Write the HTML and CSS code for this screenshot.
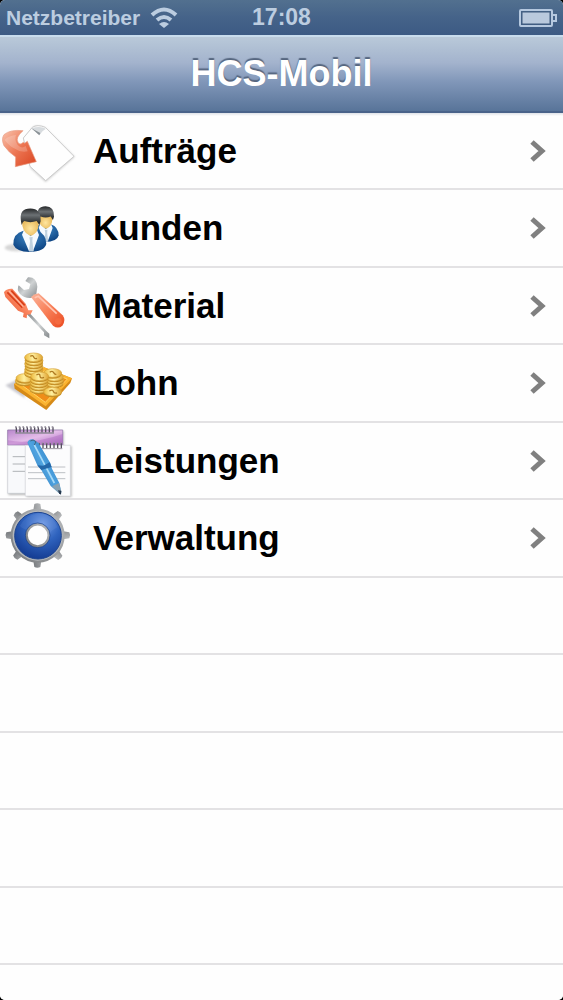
FILE: index.html
```html
<!DOCTYPE html>
<html lang="de">
<head>
    <meta charset="UTF-8">
    <meta name="viewport" content="width=device-width, initial-scale=1.0">
    <title>HCS-Mobil</title>
    <link rel="stylesheet" href="styles.css">
</head>
<body>
    <div class="screen">
        <div class="status-bar">
            <div class="carrier">
                <span>Netzbetreiber</span>
                <svg class="wifi" viewBox="0 0 28 22" aria-hidden="true">
                    <path d="M2 8Q14 -3 26 8M7 13Q14 7 21 13" fill="none" stroke="#bccde0" stroke-width="4"/>
                    <path d="M9 17Q14 13 19 17L14 21Z" fill="#bccde0"/>
                </svg>
            </div>
            <span class="time">17:08</span>
            <svg class="battery" viewBox="0 0 38 18" aria-hidden="true">
                <rect x="1" y="1" width="32" height="16" rx="1" fill="none" stroke="#b5c8df" stroke-width="2"/>
                <rect x="3" y="3" width="28" height="12" fill="#b9c9dd" stroke="#3f5a7e"/>
                <path d="M34 6H37V12H34" fill="none" stroke="#b5c8df" stroke-width="2"/>
            </svg>
        </div>

        <header class="nav-bar">
            <h1>HCS-Mobil</h1>
        </header>

        <nav class="list">
            <a class="row" href="#auftraege">
                <svg class="icon" viewBox="0 0 270 225" aria-hidden="true">
                    <defs>
                        <linearGradient id="arrow" x1="0" y1="0" x2="1" y2="1">
                            <stop offset="0" stop-color="#f9c3ad"/>
                            <stop offset=".5" stop-color="#ec7552"/>
                            <stop offset="1" stop-color="#d94420"/>
                        </linearGradient>
                        <filter id="soft" x="-20%" y="-20%" width="140%" height="140%">
                            <feGaussianBlur stdDeviation="3"/>
                        </filter>
                    </defs>
                    <path d="M75 78L100 42Q112 35 136 45L224 131L137 207L92 166Z" fill="#999" opacity=".5" filter="url(#soft)"/>
                    <path d="M70 75L97 43Q112 33 136 43L222 130L137 203L90 160Z" fill="#fefefe" stroke="#ccc" stroke-width="3"/>
                    <path d="M94 46Q104 53 118 67Q125 53 138 47Q120 38 94 46Z" fill="#d8dcdf"/>
                    <path d="M94 46L118 67L121 60Z" fill="#8a9196"/>
                    <path d="M69 53Q30 49 12 65Q3 78 12 98Q27 119 47 132L46 161L109 146L82 85L74 91L70 88Q59 98 54 88Q45 74 69 53Z" fill="url(#arrow)" stroke="#e99a80" stroke-width="2"/>
                    <path d="M14 80Q28 68 48 66Q42 80 53 96Q65 109 77 99L83 115Q62 120 42 106Q23 95 14 80Z" fill="#fff" opacity=".2"/>
                </svg>
                <span class="label">Aufträge</span>
                <svg class="chevron" viewBox="0 0 16 22" aria-hidden="true"><path d="M2 2L12 11L2 20"/></svg>
            </a>
            <a class="row" href="#kunden">
                <svg class="icon" viewBox="0 0 270 225" aria-hidden="true">
                    <defs>
                        <radialGradient id="suit" cx=".5" cy=".3" r=".7">
                            <stop offset="0" stop-color="#3c86c4"/>
                            <stop offset="1" stop-color="#0d4382"/>
                        </radialGradient>
                        <radialGradient id="face" cx=".5" cy=".6" r=".6">
                            <stop offset="0" stop-color="#ffe6a0"/>
                            <stop offset="1" stop-color="#e5b352"/>
                        </radialGradient>
                        <linearGradient id="hair" x1="0" y1="0" x2="0" y2="1">
                            <stop offset="0" stop-color="#252729"/>
                            <stop offset=".4" stop-color="#6c7174"/>
                            <stop offset="1" stop-color="#17191b"/>
                        </linearGradient>
                        <g id="person">
                            <path d="M40 161Q39 127 70 119L112 119Q138 128 139 159Q133 182 89 183Q48 181 40 161Z" fill="url(#suit)"/>
                            <path d="M72 116L66 131L87 181H99L117 132L110 114L92 136Z" fill="#f5faff"/>
                            <path d="M88 139L98 138L97 150L101 181H87L90 150Z" fill="#bfd1df"/>
                            <path d="M66 91Q66 124 87 132Q94 137 102 130Q118 120 116 86L101 80L77 83Z" fill="url(#face)"/>
                            <path d="M65 102Q54 56 83 53Q124 48 122 91L118 102L110 90Q91 97 73 90Q68 92 65 102Z" fill="url(#hair)"/>
                        </g>
                    </defs>
                    <ellipse cx="50" cy="170" rx="36" ry="11" fill="#777" opacity=".3" filter="url(#soft)"/>
                    <use href="#person" transform="translate(62 3) scale(.82)"/>
                    <use href="#person"/>
                </svg>
                <span class="label">Kunden</span>
                <svg class="chevron" viewBox="0 0 16 22" aria-hidden="true"><path d="M2 2L12 11L2 20"/></svg>
            </a>
            <a class="row" href="#material">
                <svg class="icon" viewBox="0 0 270 225" aria-hidden="true">
                    <defs>
                        <linearGradient id="steel" x1="0" y1="0" x2="1" y2="1">
                            <stop offset="0" stop-color="#777d80"/>
                            <stop offset=".5" stop-color="#d0d3d4"/>
                            <stop offset="1" stop-color="#84898c"/>
                        </linearGradient>
                        <linearGradient id="grip" x1="1" y1="0" x2="0" y2="1">
                            <stop offset="0" stop-color="#e65c38"/>
                            <stop offset=".45" stop-color="#fb8963"/>
                            <stop offset="1" stop-color="#e2431c"/>
                        </linearGradient>
                        <linearGradient id="handle" x1="0" y1="0" x2="1" y2="1">
                            <stop offset="0" stop-color="#fbb49b"/>
                            <stop offset=".5" stop-color="#f87f58"/>
                            <stop offset="1" stop-color="#ea4a20"/>
                        </linearGradient>
                    </defs>
                    <path d="M84 28Q109 26 112 56L109 78L94 90Q74 92 60 78Q49 65 56 52L72 66L87 63L91 48L76 39Z" fill="url(#steel)"/>
                    <path d="M93 87Q101 78 116 76L188 142Q199 157 187 173Q174 184 159 173Z" fill="url(#handle)"/>
                    <path d="M104 89L115 85L170 137" fill="none" stroke="#ffc4b0" stroke-width="5"/>
                    <circle cx="175" cy="160" r="10" fill="#f4693f"/>
                    <path d="M81 139L88 134L139 189L148 197V211L132 202L132 193Z" fill="url(#steel)"/>
                    <path d="M12 73Q18 61 37 62L77 107L85 127L98 127L92 139L81 140L80 151L69 147L71 135L54 128L16 87Z" fill="url(#grip)"/>
                    <path d="M22 73L67 119M34 68L74 112" fill="none" stroke="#d9401a" stroke-width="5"/>
                    <path d="M27 69L70 116" fill="none" stroke="#ffb59d" stroke-width="4"/>
                </svg>
                <span class="label">Material</span>
                <svg class="chevron" viewBox="0 0 16 22" aria-hidden="true"><path d="M2 2L12 11L2 20"/></svg>
            </a>
            <a class="row" href="#lohn">
                <svg class="icon" viewBox="0 0 270 225" aria-hidden="true">
                    <defs>
                        <linearGradient id="gold" x1="0" y1="0" x2="1" y2="0">
                            <stop offset="0" stop-color="#ecb93c"/>
                            <stop offset=".45" stop-color="#fff0a0"/>
                            <stop offset="1" stop-color="#dfa432"/>
                        </linearGradient>
                        <g id="coin">
                            <ellipse cx="0" cy="4" rx="27" ry="13" fill="#c28d25"/>
                            <ellipse cx="0" cy="0" rx="27" ry="13" fill="url(#gold)" stroke="#d6a136" stroke-width="2"/>
                        </g>
                    </defs>
                    <path d="M16 118L66 95L75 157L120 185L45 137Z" fill="#778" opacity=".4" filter="url(#soft)"/>
                    <path d="M42 114L132 64L216 97L211 111L139 192L44 128Z" fill="#d68a17"/>
                    <path d="M42 114L132 64L216 97L137 181Z" fill="#fbb32f"/>
                    <path d="M61 114L133 75L202 99L136 169Z" fill="#ef8d19" stroke="#ffd464" stroke-width="3"/>
                    <use href="#coin" x="73" y="104"/>
                    <use href="#coin" x="75" y="96"/>
                    <use href="#coin" x="100" y="80"/>
                    <use href="#coin" x="101" y="71"/>
                    <use href="#coin" x="102" y="62"/>
                    <use href="#coin" x="101" y="53"/>
                    <use href="#coin" x="102" y="44"/>
                    <use href="#coin" x="101" y="34"/>
                    <use href="#coin" x="163" y="110"/>
                    <use href="#coin" x="164" y="101"/>
                    <use href="#coin" x="163" y="92"/>
                    <use href="#coin" x="158" y="81"/>
                    <use href="#coin" x="116" y="128"/>
                    <use href="#coin" x="117" y="119"/>
                    <use href="#coin" x="117" y="110"/>
                    <use href="#coin" x="118" y="101"/>
                    <use href="#coin" x="119" y="91"/>
                    <use href="#coin" x="158" y="137"/>
                    <path d="M91 31Q98 26 101 33T111 37M109 87Q120 81 120 90T132 94M149 79Q157 73 161 80T169 84M148 135Q158 129 160 136T171 141" fill="none" stroke="#ae7a22" stroke-width="4"/>
                </svg>
                <span class="label">Lohn</span>
                <svg class="chevron" viewBox="0 0 16 22" aria-hidden="true"><path d="M2 2L12 11L2 20"/></svg>
            </a>
            <a class="row" href="#leistungen">
                <svg class="icon" viewBox="0 0 270 225" aria-hidden="true">
                    <defs>
                        <linearGradient id="cover" x1="0" y1="0" x2="1" y2="1">
                            <stop offset="0" stop-color="#b887cc"/>
                            <stop offset=".5" stop-color="#e4bce9"/>
                            <stop offset="1" stop-color="#a669bd"/>
                        </linearGradient>
                        <linearGradient id="pen" x1="0" y1="1" x2="1" y2="0">
                            <stop offset="0" stop-color="#145294"/>
                            <stop offset=".5" stop-color="#4fa3e0"/>
                            <stop offset="1" stop-color="#1767b0"/>
                        </linearGradient>
                    </defs>
                    <path d="M25 24H191V216H25Z" fill="#777" opacity=".5" filter="url(#soft)"/>
                    <path d="M23 21H188V211H23Z" fill="#f8f9fb" stroke="#c9cbd2" stroke-width="2"/>
                    <path d="M23 21H188V66H23Z" fill="url(#cover)" stroke="#9275aa" stroke-width="2"/>
                    <path d="M24 52Q92 66 188 33V65H24Z" fill="#a75dbb" opacity=".35"/>
                    <path d="M49 29V13M60 29V13M71 29V13M82 29V13M93 29V13M104 29V13M115 29V13M126 29V13M137 29V13M148 29V13M159 29V13" stroke="#56505f" stroke-width="4"/>
                    <path d="M45 12H50M56 12H61M67 12H72M78 12H83M89 12H94M100 12H105M111 12H116M122 12H127M133 12H138M144 12H149M155 12H160M46 30H162" stroke="#8f8996" stroke-width="4"/>
                    <path d="M38 101H75M38 123H75M38 145H75" stroke="#8b8f94" stroke-width="2"/>
                    <path d="M79 69H215V222H79Z" fill="#777" opacity=".5" filter="url(#soft)"/>
                    <path d="M76 67H211V219H76Z" fill="#fcfcfd" stroke="#d5d7dc" stroke-width="2"/>
                    <path d="M118 76V60M129 76V60M140 76V60M151 76V60M162 76V60M173 76V60M184 76V60" stroke="#57515f" stroke-width="4"/>
                    <path d="M114 60H119M125 60H130M136 60H141M147 60H152M158 60H163M169 60H174M180 60H185M113 77H187" stroke="#99939e" stroke-width="3"/>
                    <path d="M84 132H196M84 149H196M84 167H196" stroke="#9da2a9" stroke-width="2"/>
                    <path d="M82 59Q88 46 102 50L116 61L151 120L156 137L178 180L184 207L181 214L173 207L152 189L124 141L112 127Z" fill="url(#pen)"/>
                    <path d="M103 66L134 125L163 180" fill="none" stroke="#a9dbf8" stroke-width="5"/>
                    <path d="M112 127L124 141L155 132L149 118L130 128Z" fill="#2467a8"/>
                    <path d="M156 190L177 180L184 207L181 214L173 207Z" fill="#8aa2b1"/>
                    <path d="M174 202L184 203L183 215L177 211Z" fill="#26374d"/>
                    <path d="M91 54Q99 47 108 56L103 66" fill="none" stroke="#446682" stroke-width="3"/>
                </svg>
                <span class="label">Leistungen</span>
                <svg class="chevron" viewBox="0 0 16 22" aria-hidden="true"><path d="M2 2L12 11L2 20"/></svg>
            </a>
            <a class="row" href="#verwaltung">
                <svg class="icon" viewBox="0 0 270 225" aria-hidden="true">
                    <defs>
                        <linearGradient id="ring" x1="1" y1="0" x2="0" y2="1">
                            <stop offset="0" stop-color="#b9bbbd"/>
                            <stop offset="1" stop-color="#777a7d"/>
                        </linearGradient>
                        <radialGradient id="blue" cx=".6" cy=".25" r=".75">
                            <stop offset="0" stop-color="#719ae4"/>
                            <stop offset=".5" stop-color="#2f63be"/>
                            <stop offset="1" stop-color="#153d94"/>
                        </radialGradient>
                        <g id="teeth">
                            <path d="M103 12Q112 7 121 12L124 30H100ZM103 201Q112 206 121 201L124 183H100Z"/>
                        </g>
                    </defs>
                    <g fill="url(#ring)">
                        <use href="#teeth"/>
                        <use href="#teeth" transform="rotate(45 113 107)"/>
                        <use href="#teeth" transform="rotate(90 113 107)"/>
                        <use href="#teeth" transform="rotate(135 113 107)"/>
                    </g>
                    <circle cx="113" cy="107" r="78" fill="#b4b7ba" stroke="url(#ring)" stroke-width="6"/>
                    <circle cx="114" cy="107" r="70" fill="url(#blue)" stroke="#1c438f" stroke-width="3"/>
                    <path d="M111 41Q155 38 172 82Q144 98 147 107Q141 73 113 73Q91 74 82 91Q61 82 60 77Q78 44 111 41Z" fill="#a9c6fa" opacity=".1"/>
                    <circle cx="113" cy="106" r="33" fill="#fefefe" stroke="url(#ring)" stroke-width="7"/>
                    <circle cx="113" cy="106" r="37" fill="none" stroke="#193e82" stroke-width="2"/>
                </svg>
                <span class="label">Verwaltung</span>
                <svg class="chevron" viewBox="0 0 16 22" aria-hidden="true"><path d="M2 2L12 11L2 20"/></svg>
            </a>
            <div class="row"></div>
            <div class="row"></div>
            <div class="row"></div>
            <div class="row"></div>
            <div class="row"></div>
            <div class="row-rest"></div>
        </nav>
    </div>
</body>
</html>
```

FILE: styles.css
```css
* {
    box-sizing: border-box;
}
body {
    margin: 0;
    background-color: #000;
    font-family: "Liberation Sans", Arial, sans-serif;
    font-weight: bold;
}
.screen {
    display: flex;
    flex-direction: column;
    min-height: 100vh;
    background-color: #fefefe;
    border-radius: 5px;
    overflow: hidden;
}
.status-bar {
    display: grid;
    grid-template-columns: 1fr auto 1fr;
    align-items: center;
    height: 35px;
    padding: 0 6px;
    background: linear-gradient(#52708f, #456389 50%, #3c5a84);
    color: #bccde0;
}
.carrier {
    display: flex;
    align-items: center;
    gap: 10px;
    font-size: 21px;
}
.wifi {
    width: 28px;
    height: 22px;
}
.time {
    font-size: 23px;
}
.battery {
    width: 38px;
    height: 18px;
    justify-self: end;
}
.nav-bar {
    display: flex;
    align-items: center;
    justify-content: center;
    height: 78px;
    background: linear-gradient(#b9c9d9, #a3b3cd 35%, #8197b9 60%, #587499);
    border-top: 2px solid #c8dced;
    border-bottom: 2px solid #4a638a;
}
.nav-bar h1 {
    margin: 0;
    font-size: 36px;
    line-height: 40px;
    color: #fff;
    text-shadow: 0 -2px 1px #56667f;
}
.list {
    display: flex;
    flex: 1;
    flex-direction: column;
    background: linear-gradient(#dfe2e8, #fefefe 3px);
}
.row {
    display: flex;
    flex: 1 0 76px;
    align-items: center;
    padding-right: 17px;
    border-bottom: 2px solid #e3e2e4;
    color: #000;
    text-decoration: none;
}
.row-rest {
    height: 35px;
}
.icon {
    width: 90px;
    height: 75px;
    flex-shrink: 0;
}
.label {
    flex: 1;
    padding-left: 3px;
    font-size: 35px;
    line-height: 40px;
}
.chevron {
    width: 16px;
    height: 22px;
    fill: none;
    stroke: #808080;
    stroke-width: 5;
}
```
